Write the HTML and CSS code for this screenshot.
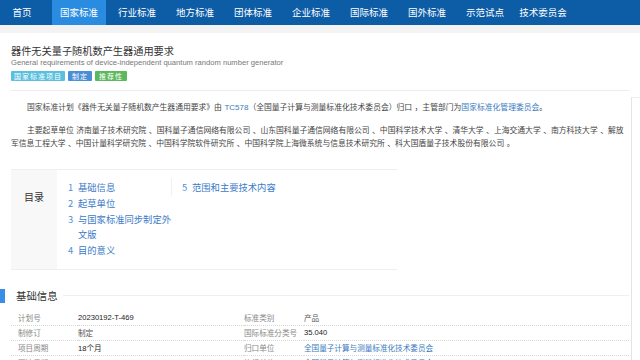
FILE: index.html
```html
<!DOCTYPE html>
<html lang="zh-CN">
<head>
  <meta charset="UTF-8">
  <title>器件无关量子随机数产生器通用要求</title>
  <link rel="stylesheet" href="styles.css">
</head>
<body>

  <div class="nav">
    <a href="#">首页</a>
    <a href="#" class="active">国家标准</a>
    <a href="#">行业标准</a>
    <a href="#">地方标准</a>
    <a href="#">团体标准</a>
    <a href="#">企业标准</a>
    <a href="#">国际标准</a>
    <a href="#">国外标准</a>
    <a href="#">示范试点</a>
    <a href="#">技术委员会</a>
  </div>
  <div class="strip"></div>

  <div class="page">
    <div class="main">
      <div class="head">
        <h1>器件无关量子随机数产生器通用要求</h1>
        <div class="en">General requirements of device-independent quantum random number generator</div>
        <div class="tags">
          <span class="tag tag-info">国家标准项目</span>
          <span class="tag tag-primary">制定</span>
          <span class="tag tag-success">推荐性</span>
        </div>
      </div>

      <p class="intro">国家标准计划《器件无关量子随机数产生器通用要求》由 <a href="#" class="en-link">TC578</a>（全国量子计算与测量标准化技术委员会）归口 ，主管部门为<a href="#">国家标准化管理委员会</a>。</p>
      <p class="intro">主要起草单位 济南量子技术研究院 、国科量子通信网络有限公司 、山东国科量子通信网络有限公司 、中国科学技术大学 、清华大学 、上海交通大学 、南方科技大学 、解放军信息工程大学 、中国计量科学研究院 、中国科学院软件研究所 、中国科学院上海微系统与信息技术研究所 、科大国盾量子技术股份有限公司 。</p>

      <div class="toc">
        <div class="toc-label">目录</div>
        <div class="toc-list">
          <ul class="toc-col">
            <li><span class="num">1</span><a href="#">基础信息</a></li>
            <li><span class="num">2</span><a href="#">起草单位</a></li>
            <li><span class="num">3</span><a href="#">与国家标准同步制定外文版</a></li>
            <li><span class="num">4</span><a href="#">目的意义</a></li>
          </ul>
          <ul class="toc-col second">
            <li><span class="num">5</span><a href="#">范围和主要技术内容</a></li>
          </ul>
        </div>
      </div>

      <div class="section-title">
        <span class="mark"></span>
        <h2>基础信息</h2>
        <span class="rule"></span>
      </div>

      <table class="basic">
        <colgroup>
          <col class="c-k1"><col class="c-v1"><col class="c-k2"><col>
        </colgroup>
        <tr>
          <td class="k">计划号</td><td class="v">20230192-T-469</td>
          <td class="k">标准类别</td><td class="v cn">产品</td>
        </tr>
        <tr>
          <td class="k">制修订</td><td class="v cn">制定</td>
          <td class="k">国际标准分类号</td><td class="v">35.040</td>
        </tr>
        <tr>
          <td class="k">项目周期</td><td class="v">18个月</td>
          <td class="k">归口单位</td><td class="v cn"><a href="#">全国量子计算与测量标准化技术委员会</a></td>
        </tr>
        <tr>
          <td class="k">下达日期</td><td class="v">2023-12-28</td>
          <td class="k">执行单位</td><td class="v cn"><a href="#">全国量子计算与测量标准化技术委员会</a></td>
        </tr>
      </table>
    </div>
    <div class="side"></div>
  </div>

</body>
</html>
```

FILE: styles.css
```css
body { margin: 0; background: #fff; font-family: "Noto Sans CJK SC", sans-serif; color: #333; }
a { text-decoration: none; }

.nav { display: flex; height: 25px; padding-left: 5px; background: #0d5ca6; }
.nav a { display: block; width: 54px; margin-right: 4px; line-height: 25px; text-align: center; font-size: 9.5px; color: #fff; }
.nav a:first-child { width: 34px; margin-right: 13px; }
.nav a.active { background: #2a8ce0; }
.strip { height: 8px; background: #f3f3f3; }

.page { display: flex; }
.main { width: 618px; padding-left: 11px; }
.side { flex: 1; margin-top: 64px; border-left: 1px solid #e4e4e4; border-top: 1px solid #eee; margin-left: 2px; }

.head { padding: 11px 0 9px; border-bottom: 1px solid #ececec; }
h1 { margin: 0; font-size: 10.2px; line-height: 14px; font-weight: normal; color: #333; }
.en { font-family: "Liberation Sans", Arial, sans-serif; font-size: 7.6px; line-height: 10px; color: #777; }
.tags { display: flex; gap: 3px; margin-top: 3px; }
.tag { font-size: 7px; line-height: 10px; padding: 0 3px; color: #fff; border-radius: 1px; letter-spacing: 1px; }
.tag-info { background: #5bc0de; }
.tag-primary { background: #4a8fd6; padding: 0 4px; }
.tag-success { background: #5cb85c; padding: 0 4px; }

.intro { margin: 10px 0 0; font-family: "Liberation Serif", "Noto Sans CJK SC", serif; font-size: 7.8px; line-height: 13px; text-indent: 16px; word-spacing: 0.5px; color: #444; }
.intro a { color: #3a7bc0; }
.intro .en-link { font-family: "Liberation Sans", Arial, sans-serif; font-size: 8px; }

.toc { display: flex; width: 386px; margin-top: 19px; border-top: 1px solid #efefef; border-bottom: 1px solid #efefef; }
.toc-label { width: 46px; padding-top: 19px; text-align: center; font-size: 10px; color: #333; background: #f8f8f8; }
.toc-list { display: flex; padding: 10px 0 10px 11px; }
.toc-col { margin: 0; padding: 0; list-style: none; width: 103px; }
.toc-col.second { width: auto; margin-top: -2px; padding: 2px 0 0 10px; height: 16px; border-left: 1px solid #f0f0f0; }
.toc-col li { display: flex; font-size: 9.3px; line-height: 15.8px; }
.toc-col .num { width: 10px; color: #4a8fd6; flex-shrink: 0; }
.toc-col a { color: #3a7bc8; }

.section-title { display: flex; align-items: center; margin: 19px 0 0 -11px; height: 14px; }
.mark { width: 5px; height: 14px; background: #3a8ee6; }
h2 { margin: 0 0 0 11px; font-size: 10.4px; font-weight: normal; color: #333; }
.rule { flex: 1; height: 1px; margin-left: 5px; background: #efefef; }

.basic { width: 618px; margin-top: 8px; border-collapse: collapse; table-layout: fixed; font-size: 7.6px; }
.c-k1 { width: 67px; }
.c-v1 { width: 166px; }
.c-k2 { width: 60px; }
.basic td { height: 14px; padding: 0; border-bottom: 1px dotted #d8d8d8; white-space: nowrap; }
.basic .k { padding-left: 7px; font-family: "Liberation Serif", "Noto Sans CJK SC", serif; color: #888; }
.basic td:nth-child(3) { padding-left: 0; }
.basic .v { font-family: "Liberation Sans", "Noto Sans CJK SC", sans-serif; color: #222; }
.basic .v.cn { font-family: "Liberation Serif", "Noto Sans CJK SC", serif; color: #555; }
.basic a { color: #3a7bc0; }
```
